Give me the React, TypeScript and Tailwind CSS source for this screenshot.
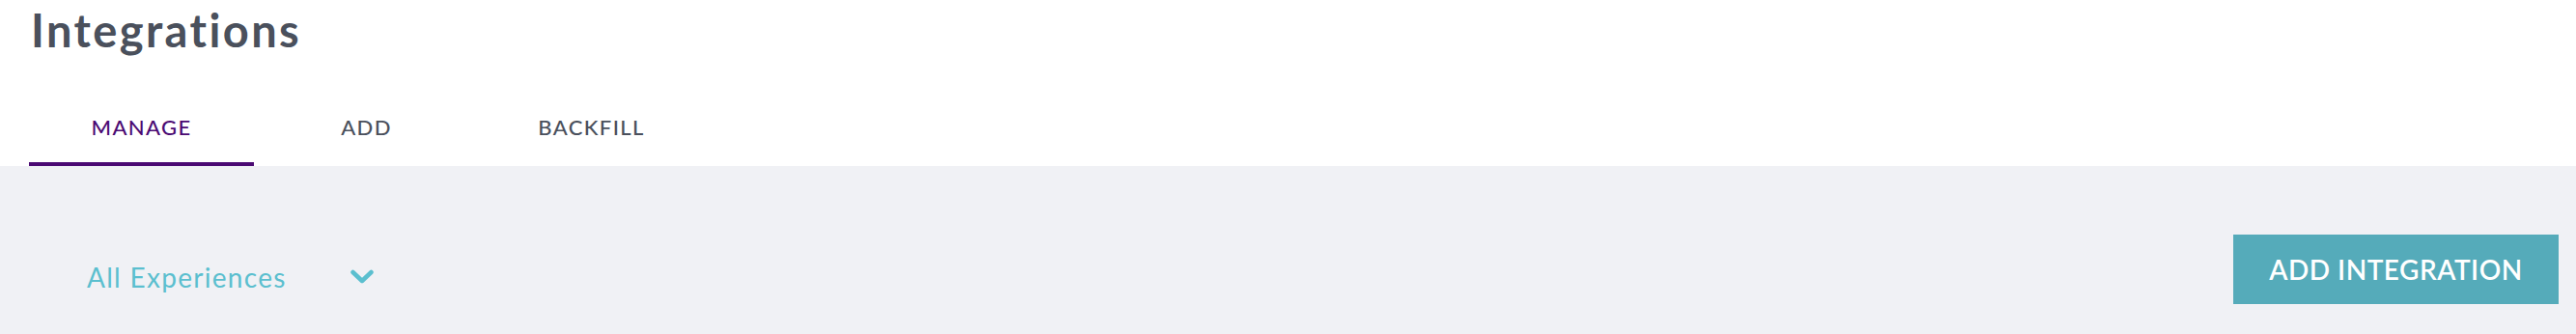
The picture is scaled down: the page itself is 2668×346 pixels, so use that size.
import React from "react";

export default function App() {
  return (
    <div className="w-[2668px] h-[346px] bg-white flex flex-col" style={{ fontFamily: "Lato, 'Open Sans', sans-serif" }}>
      <div className="h-[172px] px-[30px] flex flex-col">
        <h1 className="text-[47px] leading-[46px] font-bold tracking-[2.4px] text-[#4a505c] pl-[2px] pt-[8px] h-[100px]">Integrations</h1>
        <div className="flex h-[72px]">
          <div className="w-[233px] flex items-center justify-center border-b-4 border-[#4b0a73] text-[#4b0a73] text-[22px] font-medium tracking-[1.4px] pb-[6px]">MANAGE</div>
          <div className="w-[233px] flex items-center justify-center text-[#4a505c] text-[22px] font-medium tracking-[1.4px] pb-[10px]">ADD</div>
          <div className="w-[233px] flex items-center justify-center text-[#4a505c] text-[22px] font-medium tracking-[1.4px] pb-[10px]">BACKFILL</div>
        </div>
      </div>
      <div className="flex-1 bg-[#f0f1f5] flex items-start justify-between pl-[90px] pr-[18px] pt-[71px]">
        <div className="flex items-center gap-[66px] mt-[23px] text-[#5bbfcf] text-[28px] tracking-[1.3px]">
          <span>All Experiences</span>
          <svg width="24" height="16" viewBox="0 0 24 16" fill="none">
            <path d="M2.5 3 L12 12 L21.5 3" stroke="#5bbfcf" strokeWidth="4.5" strokeLinecap="round" strokeLinejoin="round" />
          </svg>
        </div>
        <button className="w-[337px] h-[72px] bg-[#55abba] text-white text-[28px] font-semibold tracking-[0.5px] flex items-center justify-center">ADD INTEGRATION</button>
      </div>
    </div>
  );
}
